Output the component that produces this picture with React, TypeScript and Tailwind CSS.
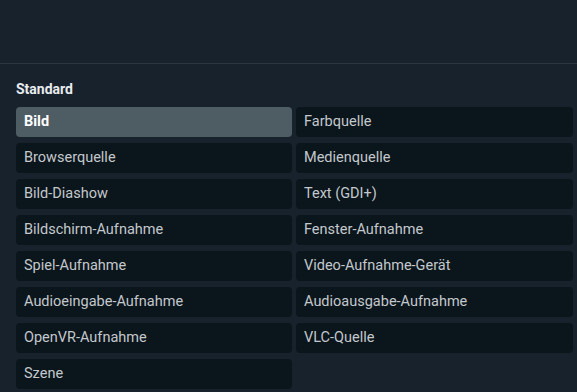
import React from "react";

const items: [string, string | null][] = [
  ["Bild", "Farbquelle"],
  ["Browserquelle", "Medienquelle"],
  ["Bild-Diashow", "Text (GDI+)"],
  ["Bildschirm-Aufnahme", "Fenster-Aufnahme"],
  ["Spiel-Aufnahme", "Video-Aufnahme-Gerät"],
  ["Audioeingabe-Aufnahme", "Audioausgabe-Aufnahme"],
  ["OpenVR-Aufnahme", "VLC-Quelle"],
  ["Szene", null],
];

export default function App() {
  return (
    <div
      className="w-[577px] h-[392px] overflow-hidden bg-[#18222c] flex flex-col"
      style={{ fontFamily: "Roboto, 'Liberation Sans', sans-serif" }}
    >
      <div className="h-[64px] shrink-0 border-b border-[#2b3741]" />
      <div className="pl-4 pr-1 pt-[16px]">
        <div className="text-[14px] font-bold text-[#e8ecef] leading-[18px] h-[18px]">Standard</div>
        <div className="mt-[9px] grid grid-cols-[276px_277px] gap-x-1 gap-y-[6px]">
          {items.flatMap(([a, b], i) => {
            const cells = [
              <button
                key={`a${i}`}
                className={
                  "h-[30px] rounded-[4px] px-2 text-left text-[14.5px] " +
                  (i === 0
                    ? "bg-[#4e5c64] text-white font-bold"
                    : "bg-[#0b151c] text-[#c3c8cc]")
                }
              >
                {a}
              </button>,
            ];
            if (b)
              cells.push(
                <button
                  key={`b${i}`}
                  className="h-[30px] rounded-[4px] px-2 text-left text-[14.5px] bg-[#0b151c] text-[#c3c8cc]"
                >
                  {b}
                </button>
              );
            return cells;
          })}
        </div>
      </div>
    </div>
  );
}
